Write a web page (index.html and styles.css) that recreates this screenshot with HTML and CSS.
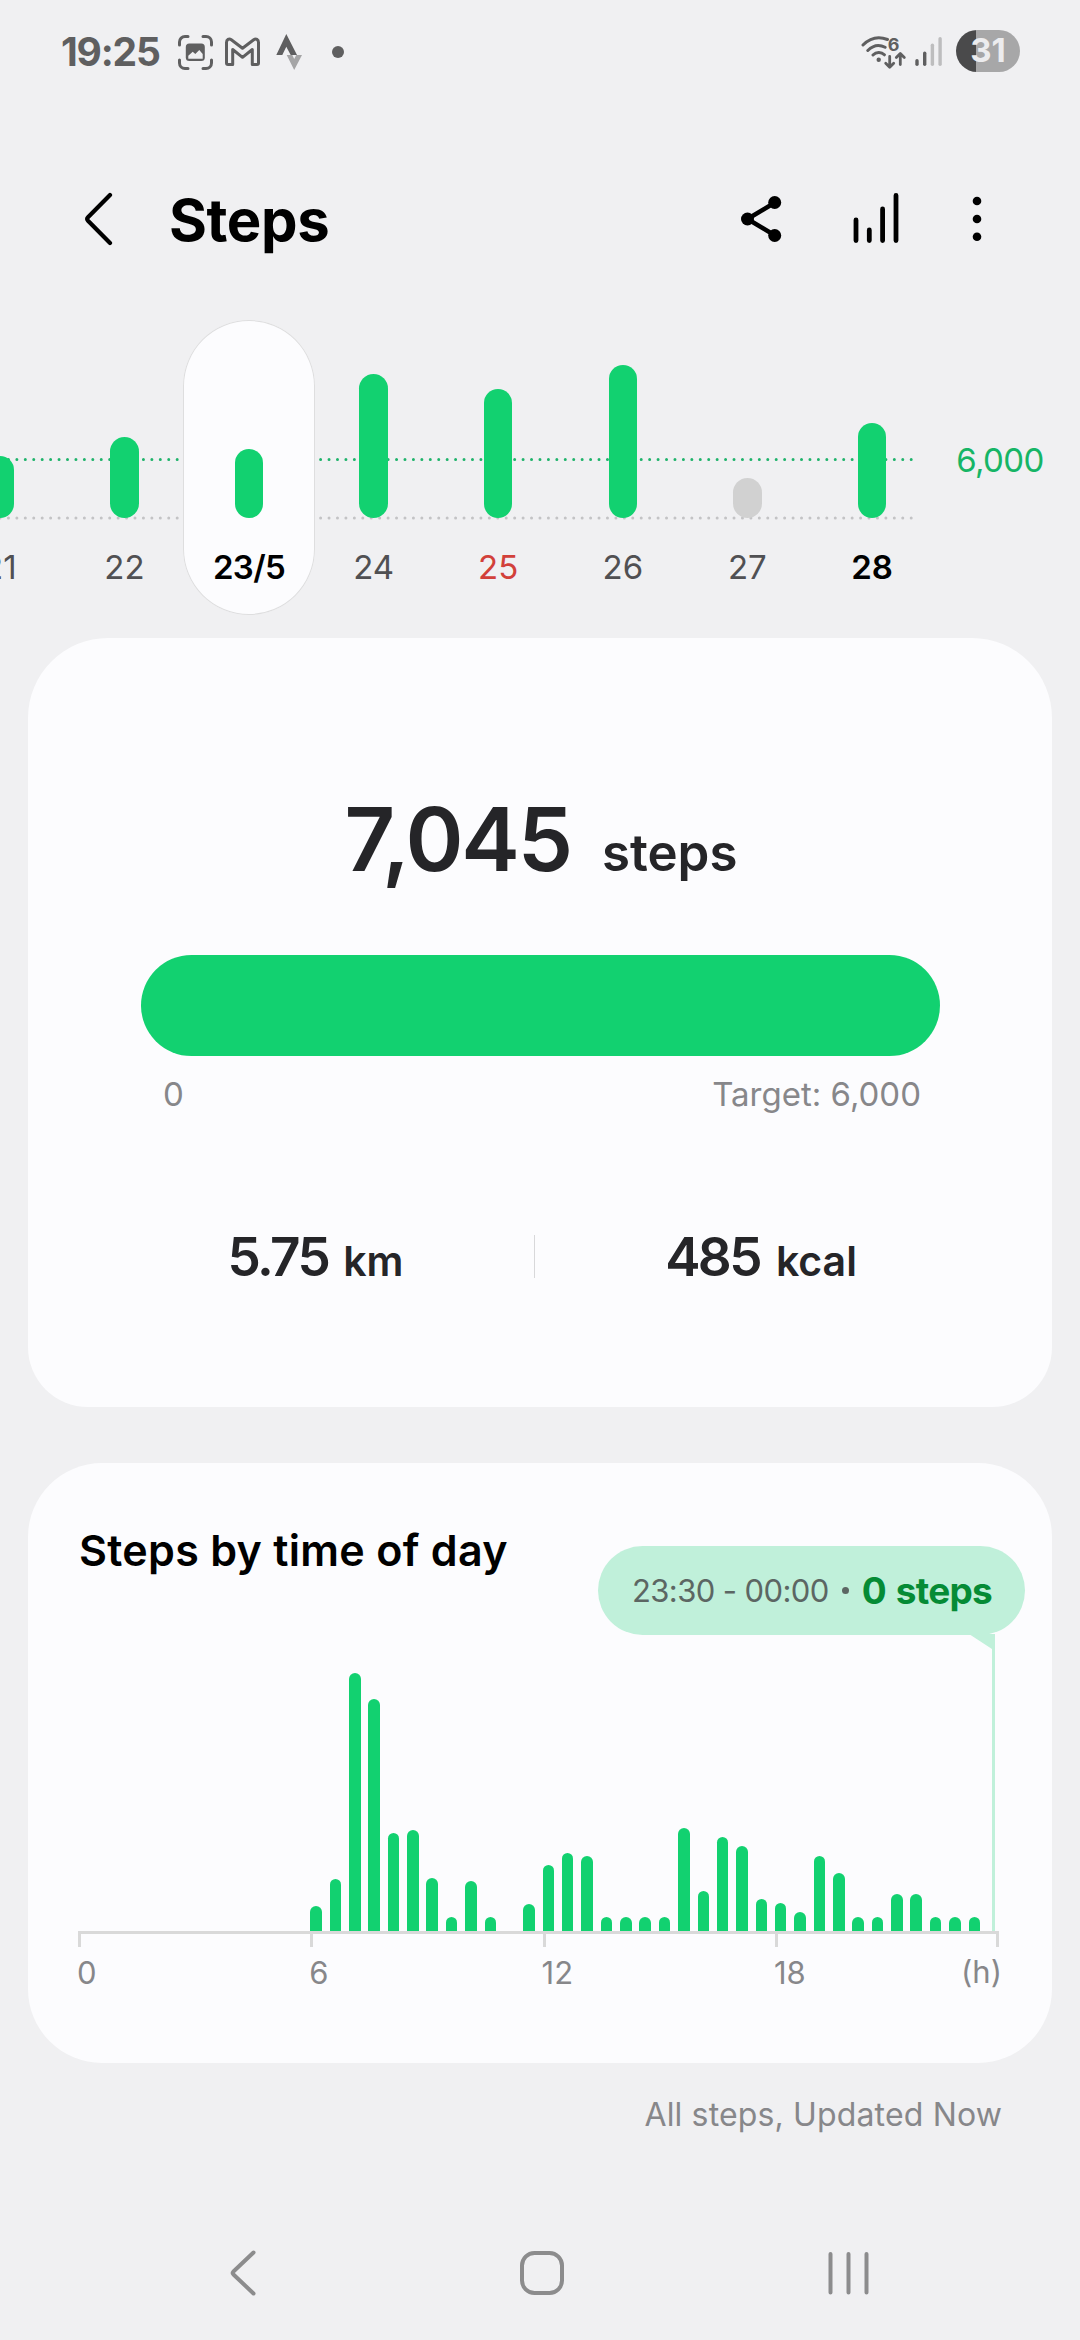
FILE: index.html
```html
<!DOCTYPE html>
<html lang="en">
<head>
    <meta charset="UTF-8">
    <meta name="viewport" content="width=device-width, initial-scale=1.0">
    <title>Steps</title>
    <link rel="stylesheet" href="styles.css">
</head>
<body>

<!-- Status bar -->
<div class="status-bar">
    <span class="clock">19:25</span>
    <svg class="icon-capture" width="35" height="35" viewBox="0 0 35 35">
        <path class="line" d="M1.5 10V7A5.5 5.5 0 0 1 7 1.5h3M25 1.5h3A5.5 5.5 0 0 1 33.500 7v3M33.500 25v3a5.500 5.500 0 0 1-5.500 5.500h-3M10 33.500H7A5.500 5.500 0 0 1 1.500 28v-3"/>
        <rect x="7.800" y="8.500" width="19" height="17.500" rx="3.500" fill="#5f5f60"/>
        <path fill="#f0f0f2" d="M10.300 20.700l4.400-4 2.600 2.300 4-4 3.400 4v4.700H10.300z"/>
    </svg>
    <svg class="icon-mail" width="35" height="30" viewBox="0 0 35 30">
        <path class="line" d="M1.500 26V5.500c0-3 2.500-4.300 4.800-2.700L17.500 11.300l11.200-8.500c2.300-1.600 4.800-.3 4.800 2.700V26c0 1-.5 1.500-1.500 1.500h-4.700V12.500L17.500 20.300 7.700 12.500v15H3c-1 0-1.500-.5-1.500-1.500z"/>
    </svg>
    <svg class="icon-run" width="26" height="36" viewBox="0 0 26 36">
        <path fill="#5f5f60" d="M10.300 0L21 21h-6.300l-4.400-8.300L6.300 21H.3z"/>
        <path fill="#a5a5a6" d="M10.700 21h5.600l1.900 4 2.100-4H26l-7.800 15z"/>
    </svg>
    <span class="more-dot"></span>
    <svg class="icon-wifi" width="46" height="36" viewBox="0 0 46 36">
        <path class="line" d="M2 10C8.500 3.500 17 .800 26.500 4.500M6.800 15.500c5-5 11.500-6.300 17.300-3.200M12 20c3.200-3.200 8.200-3.400 11.400-.2"/>
        <circle cx="17.700" cy="24.700" r="2.200" fill="#5f5f60"/>
        <text x="26.800" y="15.500">6</text>
        <path class="line thin" d="M28.700 21.500v10.500M24.700 28.300l4 4 4-4M39.300 29.500V19M35.300 22.500l4-4 4 4"/>
    </svg>
    <svg class="icon-signal" width="28" height="30" viewBox="0 0 28 30">
        <rect x="0.300" y="22" width="3.400" height="7" rx="1.700" fill="#5f5f60"/>
        <rect x="8" y="14.500" width="3.400" height="14.500" rx="1.700" fill="#5f5f60"/>
        <rect x="15.700" y="6.500" width="3.400" height="22.500" rx="1.700" fill="#bdbdbe"/>
        <rect x="23.400" y="0" width="3.400" height="29" rx="1.700" fill="#bdbdbe"/>
    </svg>
    <span class="battery">31</span>
</div>

<!-- Title bar -->
<header>
    <svg width="30" height="56" viewBox="0 0 30 56">
        <path class="stroke" stroke-width="4.200" d="M26 4L4 26.300q-1.600 1.700 0 3.400L26 52"/>
    </svg>
    <h1>Steps</h1>
    <svg class="icon-share" width="42" height="48" viewBox="0 0 42 48">
        <path class="stroke" stroke-width="4.500" d="M34 7.500L6.500 24 34 40.500"/>
        <circle cx="6.500" cy="24" r="6.500"/>
        <circle cx="33.700" cy="7.500" r="6.500"/>
        <circle cx="33.700" cy="40.500" r="6.500"/>
    </svg>
    <svg class="icon-chart" width="46" height="54" viewBox="0 0 46 54">
        <path class="stroke" stroke-width="4.800" d="M3 28v20.500M16.300 38v10.500M29.600 17v31.500M43 3.500v45"/>
    </svg>
    <svg class="icon-more" width="10" height="46" viewBox="0 0 10 46">
        <circle cx="5" cy="5" r="4.300"/>
        <circle cx="5" cy="23" r="4.300"/>
        <circle cx="5" cy="40.700" r="4.300"/>
    </svg>
</header>

<!-- Daily overview -->
<div class="week">
    <svg class="guides" width="920" height="328" viewBox="0 0 920 328">
        <line x1="0" y1="149.500" x2="912" y2="149.500" stroke="#1fb36b"/>
        <line x1="0" y1="208" x2="912" y2="208" stroke="#c3c3c5"/>
    </svg>
    <div class="days" id="days"></div>
    <span class="goal">6,000</span>
</div>

<!-- Selected day -->
<div class="card summary">
    <div class="total"><span class="count">7,045</span><span class="unit">steps</span></div>
    <div class="progress"></div>
    <div class="range"><span>0</span><span>Target: 6,000</span></div>
    <div class="stats">
        <div class="stat distance"><span class="value">5.75</span><span class="unit">km</span></div>
        <div class="divider"></div>
        <div class="stat energy"><span class="value">485</span><span class="unit">kcal</span></div>
    </div>
</div>

<!-- Steps by half hour -->
<div class="card hourly">
    <h2>Steps by time of day</h2>
    <div class="bars" id="bars"></div>
    <div class="axis"><i></i><i></i><i></i><i></i></div>
    <div class="hours">
        <span>0</span><span>6</span><span>12</span><span>18</span><span class="h">(h)</span>
    </div>
    <div class="marker"></div>
    <div class="tooltip">
        <span class="time">23:30 - 00:00</span>
        <span class="dot"></span>
        <span class="steps">0 steps</span>
    </div>
</div>

<p class="updated">All steps, Updated Now</p>

<!-- Navigation bar -->
<nav>
    <svg width="26" height="46" viewBox="0 0 26 46">
        <path d="M23.500 2.500L3.200 21.800q-1.200 1.200 0 2.400L23.500 43.500"/>
    </svg>
    <svg width="44" height="44" viewBox="0 0 44 44">
        <rect x="2" y="2" width="40" height="40" rx="12.500"/>
    </svg>
    <svg width="41" height="44" viewBox="0 0 41 44">
        <path d="M2.500 3v38.500M20.500 3v38.500M38.500 3v38.500"/>
    </svg>
</nav>

<script>
    // Bar heights for each day
    const days = [
        { label: "21", height: 62 },
        { label: "22", height: 81 },
        { label: "23/5", height: 69, type: "selected" },
        { label: "24", height: 144.5 },
        { label: "25", height: 129, type: "sunday" },
        { label: "26", height: 153 },
        { label: "27", height: 40, type: "missed" },
        { label: "28", height: 95.5, type: "today" }
    ];

    document.getElementById("days").innerHTML = days.map(day =>
        `<div class="day ${day.type || ""}">
            <div class="plot"><div class="bar" style="height: ${day.height}px"></div></div>
            <span>${day.label}</span>
        </div>`
    ).join("");

    // 48 half hour slots, starting at midnight
    const slots = [
        0, 0, 0, 0, 0, 0, 0, 0, 0, 0, 0, 0,
        25, 52, 258, 232, 98, 101, 53, 14, 50, 14, 0, 27,
        66, 78, 75, 14, 14, 14, 14, 103.5, 40, 94, 85, 32,
        28, 19.5, 75, 58, 14, 14.5, 37, 37.5, 14, 14, 14, 0
    ];

    document.getElementById("bars").innerHTML = slots.map(height =>
        `<div style="height: ${height}px"></div>`
    ).join("");
</script>

</body>
</html>
```
FILE: styles.css
```css
* {
    box-sizing: border-box;
}
body {
    font-family: Inter, Roboto, sans-serif;
    width: 1080px;
    height: 2340px;
    margin: 0;
    overflow: hidden;
    background-color: #f0f0f2;
    color: #000;
}
svg {
    display: block;
    flex: none;
}

/* Status bar */
.status-bar {
    display: flex;
    align-items: center;
    height: 102px;
    padding: 0 60px 0 61px;
}
.clock {
    width: 117px;
    font-size: 39px;
    font-weight: 700;
    letter-spacing: -1.2px;
    color: #5f5f60;
}
.line {
    fill: none;
    stroke: #5f5f60;
    stroke-width: 3;
    stroke-linecap: round;
    stroke-linejoin: round;
}
.thin {
    stroke-width: 2.8;
}
.icon-capture {
    margin: 3px 12px 0 0;
}
.icon-mail {
    margin: 1px 16px 0 0;
}
.icon-run {
    margin: 2px 30px 0 0;
}
.more-dot {
    width: 12px;
    height: 12px;
    margin-top: 2px;
    border-radius: 50%;
    background-color: #5f5f60;
}
.icon-wifi {
    margin: 4px 8px 0 auto;
}
.icon-wifi text {
    font-size: 18px;
    font-weight: 700;
    fill: #5f5f60;
}
.icon-signal {
    margin: 1px 13px 0 0;
}
.battery {
    width: 64px;
    height: 42px;
    border-radius: 21px;
    background: linear-gradient(to right, #4a4a4b 20px, #a7a7a8 20px);
    color: #ececee;
    font-size: 33px;
    font-weight: 700;
    line-height: 41px;
    text-align: center;
}

/* Title bar */
header {
    display: flex;
    align-items: center;
    height: 208px;
    padding: 26px 98px 0 84px;
}
header h1 {
    margin: 0 auto 0 55px;
    padding-top: 2px;
    font-size: 58px;
    font-weight: 700;
    letter-spacing: -0.4px;
    line-height: 80px;
}
.stroke {
    fill: none;
    stroke: #000;
    stroke-linecap: round;
    stroke-linejoin: round;
}
.icon-share {
    margin-right: 70px;
}
.icon-chart {
    margin-right: 73px;
}

/* Daily overview */
.week {
    position: relative;
    display: flex;
    height: 328px;
}
.guides {
    position: absolute;
    left: 0;
    top: 0;
}
.guides line {
    stroke-width: 3;
    stroke-linecap: round;
    stroke-dasharray: 0 8.437;
}
.days {
    position: relative;
    display: flex;
    flex: none;
    margin: 10px 0 0 -62.5px;
}
.day {
    width: 124.6px;
    height: 295px;
    font-size: 33px;
    line-height: 98px;
    text-align: center;
    color: #505053;
}
.plot {
    display: flex;
    justify-content: center;
    align-items: flex-end;
    height: 198px;
}
.bar {
    width: 28.5px;
    border-radius: 15px;
    background-color: #12d170;
}
.selected {
    width: 132px;
    margin: 0 -3.7px;
    border-radius: 66px;
    background-color: #fcfcfe;
    box-shadow: inset 0 0 0 1px #dededf;
    color: #000;
    font-weight: 600;
    letter-spacing: -0.7px;
}
.sunday {
    color: #d2403a;
}
.missed .bar {
    background-color: #d1d1d1;
}
.today {
    color: #000;
    font-weight: 600;
}
.goal {
    margin-left: 22px;
    font-size: 33px;
    letter-spacing: -0.6px;
    line-height: 300px;
    color: #16b566;
}

/* Cards */
.card {
    width: 1024px;
    margin: 0 28px;
    background-color: #fcfcfe;
}
.summary {
    height: 768.5px;
    padding-top: 157px;
    border-radius: 80px 80px 60px 60px;
    color: #252528;
}
.total {
    display: flex;
    justify-content: center;
    align-items: baseline;
    gap: 31px;
    height: 88px;
    padding-left: 2px;
    line-height: 88px;
    font-weight: 600;
}
.total .count {
    font-size: 88px;
    letter-spacing: -2.2px;
}
.total .unit {
    font-size: 51px;
}
.progress {
    height: 100.5px;
    margin: 72px 112.5px 0;
    border-radius: 51px;
    background-color: #12d170;
}
.range {
    display: flex;
    justify-content: space-between;
    margin: 18px 131px 0 135px;
    font-size: 33px;
    line-height: 40px;
    color: #87878a;
}
.stats {
    display: flex;
    align-items: center;
    margin-top: 111px;
    padding: 0 65px 0 69px;
    font-weight: 600;
    line-height: 64px;
}
.stat {
    display: flex;
    justify-content: center;
    align-items: baseline;
    flex: 1;
    gap: 15px;
    height: 64px;
}
.distance {
    flex: 0 0 437px;
}
.stat .value {
    font-size: 53px;
    letter-spacing: -2.6px;
}
.stat .unit {
    font-size: 41px;
}
.energy {
    gap: 16px;
}
.divider {
    width: 1px;
    height: 43px;
    background-color: #d8d8da;
}

/* Steps by half hour */
.hourly {
    position: relative;
    height: 600px;
    margin-top: 56.5px;
    padding: 57px 0 0 50px;
    border-radius: 74px;
}
.hourly h2 {
    margin: 0 0 0 1px;
    font-size: 43px;
    font-weight: 600;
    letter-spacing: 0.3px;
    line-height: 60px;
}
.bars {
    display: grid;
    grid-template-columns: repeat(48, 19.36px);
    align-items: end;
    height: 351px;
}
.bars div {
    width: 11.5px;
    border-radius: 6px 6px 0 0;
    background-color: #12d170;
}
.axis {
    display: flex;
    justify-content: space-between;
    width: 921px;
    height: 16px;
    border: 3px solid #d9d9d9;
    border-width: 3px 3px 0 0;
}
.axis i {
    flex: 0 0 232.3px;
    border-left: 3px solid #d9d9d9;
}
.axis i:last-child {
    flex: 1;
}
.hours {
    display: flex;
    width: 925px;
    margin: 6px 0 0 -1px;
    font-size: 31px;
    line-height: 40px;
    color: #87878a;
}
.hours span {
    width: 232.3px;
}
.hours .h {
    width: auto;
    margin-left: auto;
    line-height: 38px;
}
.hours span:nth-child(4) {
    width: auto;
}
.marker {
    position: absolute;
    left: 964px;
    top: 172px;
    width: 3px;
    height: 296px;
    background-color: #c0f0da;
}
.tooltip {
    position: absolute;
    left: 570px;
    top: 83px;
    display: flex;
    align-items: center;
    width: 427px;
    height: 89px;
    padding-left: 34px;
    border-radius: 44.5px;
    background-color: #c0f0da;
}
.tooltip::after {
    content: "";
    position: absolute;
    left: 371px;
    top: 88px;
    width: 26px;
    height: 17px;
    background-color: #c0f0da;
    clip-path: polygon(0 0, 100% 0, 100% 100%);
}
.tooltip .time {
    font-size: 31px;
    letter-spacing: -0.6px;
    color: #5c6663;
}
.tooltip .dot {
    width: 7px;
    height: 7px;
    margin: 0 13px;
    border-radius: 50%;
    background-color: #5c6663;
}
.tooltip .steps {
    font-size: 37px;
    font-weight: 700;
    letter-spacing: -0.8px;
    word-spacing: 2px;
    color: #058b35;
}

.updated {
    margin: 30px 78px 0 0;
    font-size: 32px;
    letter-spacing: 0.15px;
    line-height: 44px;
    text-align: right;
    color: #87878a;
}

/* Navigation bar */
nav {
    display: flex;
    align-items: center;
    justify-content: space-between;
    height: 131px;
    margin-top: 70px;
    padding: 0 211px 0 230px;
}
nav svg {
    fill: none;
    stroke: #8c8c8d;
    stroke-width: 4;
    stroke-linecap: round;
    stroke-linejoin: round;
}
```
